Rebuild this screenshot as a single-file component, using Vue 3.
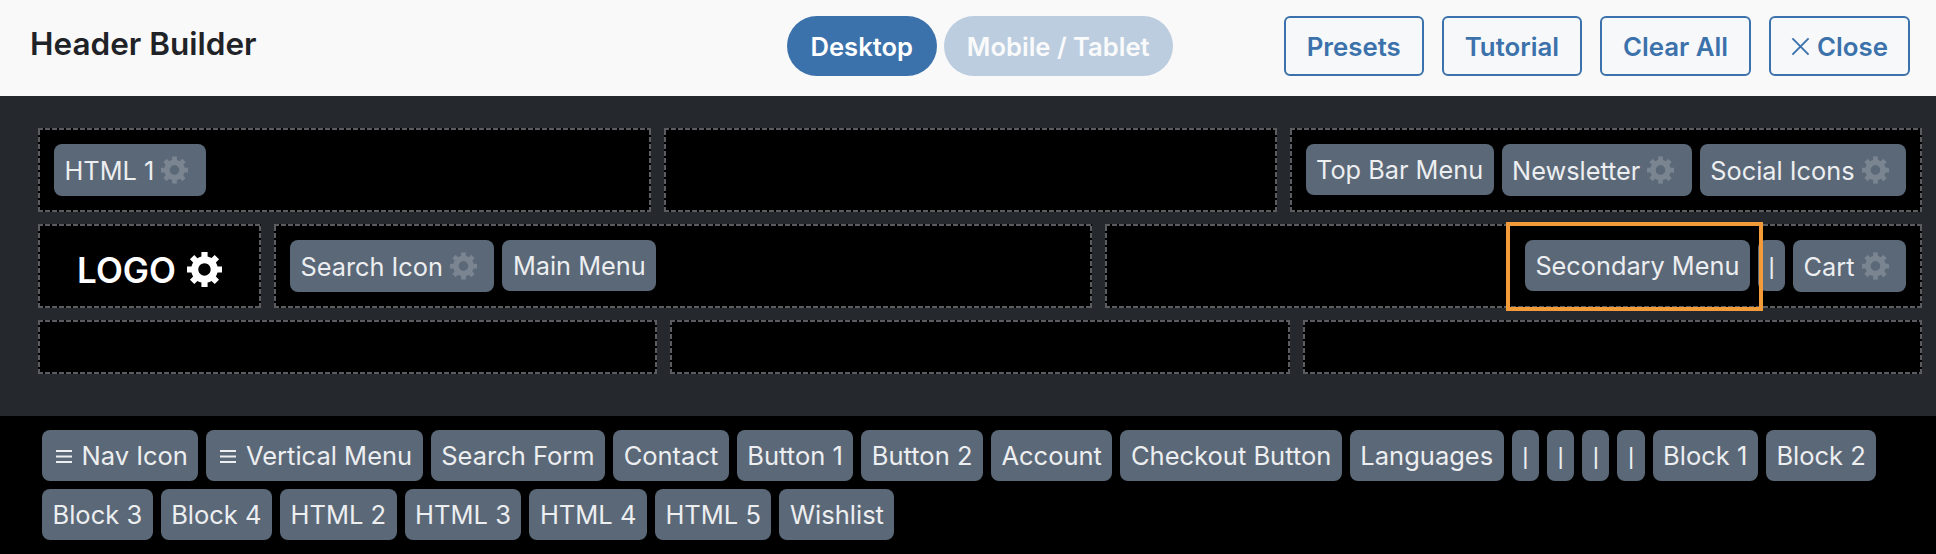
<template>
  <div class="builder">
    <header class="topbar">
      <h1 class="title">Header Builder</h1>
      <div class="toggle">
        <button class="pill active">Desktop</button>
        <button class="pill faded">Mobile / Tablet</button>
      </div>
      <div class="actions">
        <button class="action">Presets</button>
        <button class="action">Tutorial</button>
        <button class="action">Clear All</button>
        <button class="action action-close">
          <svg class="close-x" viewBox="0 0 20 20"><path d="M1.5 1.5l17 17M18.5 1.5l-17 17" /></svg>
          Close
        </button>
      </div>
    </header>

    <section class="canvas">
      <div class="row row-top">
        <div class="cell">
          <div class="chip">HTML 1<svg class="gear" viewBox="1 2 17 17"><path :d="gearPath" /></svg></div>
        </div>
        <div class="cell"></div>
        <div class="cell">
          <div v-for="item in topRight" :key="item.label" class="chip">
            {{ item.label }}<svg v-if="item.gear" class="gear" viewBox="1 2 17 17"><path :d="gearPath" /></svg>
          </div>
        </div>
      </div>

      <div class="row row-main">
        <div class="cell logo-cell">
          <span class="logo">LOGO</span>
          <svg class="logo-gear" viewBox="1 2 17 17"><path :d="gearPath" /></svg>
        </div>
        <div class="cell">
          <div class="chip">Search Icon<svg class="gear" viewBox="1 2 17 17"><path :d="gearPath" /></svg></div>
          <div class="chip">Main Menu</div>
        </div>
        <div class="cell cell-end">
          <div class="chip selected">Secondary Menu</div>
          <div class="chip sep">|</div>
          <div class="chip">Cart<svg class="gear" viewBox="1 2 17 17"><path :d="gearPath" /></svg></div>
        </div>
      </div>

      <div class="row row-bottom">
        <div class="cell"></div>
        <div class="cell"></div>
        <div class="cell"></div>
      </div>
    </section>

    <section class="tray">
      <div v-for="(item, i) in trayItems" :key="i" class="chip" :class="{ sep: item.label === '|' }">
        <svg v-if="item.nav" class="nav-bars" viewBox="0 0 16 13"><path d="M0 1h16M0 6.5h16M0 12h16" /></svg>
        {{ item.label }}
      </div>
    </section>
  </div>
</template>

<script setup>
const gearPath =
  'M18 12h-2.18c-.17.7-.44 1.35-.81 1.93l1.54 1.54-2.1 2.1-1.54-1.54c-.58.36-1.23.63-1.91.79V19H8v-2.18c-.68-.16-1.33-.43-1.91-.79l-1.54 1.54-2.12-2.12 1.54-1.54c-.36-.58-.63-1.23-.79-1.91H1V9.03h2.17c.16-.7.44-1.35.8-1.94L2.43 5.55l2.1-2.1 1.54 1.54c.58-.37 1.24-.64 1.93-.81V2h3v2.18c.68.16 1.33.43 1.91.79l1.54-1.54 2.12 2.12-1.54 1.54c.36.59.64 1.24.8 1.94H18V12zm-8.5 1.5c1.66 0 3-1.34 3-3s-1.34-3-3-3-3 1.34-3 3 1.34 3 3 3z'

const topRight = [
  { label: 'Top Bar Menu' },
  { label: 'Newsletter', gear: true },
  { label: 'Social Icons', gear: true },
]

const trayItems = [
  { label: 'Nav Icon', nav: true },
  { label: 'Vertical Menu', nav: true },
  ...[
    'Search Form', 'Contact', 'Button 1', 'Button 2', 'Account', 'Checkout Button', 'Languages',
    '|', '|', '|', '|', 'Block 1', 'Block 2', 'Block 3', 'Block 4',
    'HTML 2', 'HTML 3', 'HTML 4', 'HTML 5', 'Wishlist',
  ].map((label) => ({ label })),
]
</script>

<style>
html,
body {
  margin: 0;
  background: #000;
}
</style>

<style scoped>
.builder {
  width: 1936px;
  height: 554px;
  overflow: hidden;
  font-family: Inter, "Liberation Sans", sans-serif;
}

.topbar {
  display: flex;
  align-items: center;
  height: 96px;
  box-sizing: border-box;
  padding: 0 26px 4px 30px;
  background: #f9f9f9;
}

.title {
  flex: 1;
  margin: 0 0 5px;
  font-size: 31.5px;
  font-weight: 600;
  color: #1f2328;
}

.toggle {
  display: flex;
  gap: 7px;
}

.pill {
  height: 60px;
  padding: 0 23px;
  border: 0;
  border-radius: 30px;
  font: 600 25.6px Inter, sans-serif;
  color: #fff;
  background: #3c72ab;
}

.pill.active {
  min-width: 150px;
}

.pill.faded {
  opacity: 0.32;
}

.actions {
  display: flex;
  gap: 18px;
  margin-left: 111px;
}

.action {
  display: flex;
  align-items: center;
  gap: 8px;
  height: 60px;
  padding: 0 21px;
  border: 2px solid #3c72ab;
  border-radius: 6px;
  font: 600 25.8px Inter, sans-serif;
  color: #3c72ab;
  background: #f6f8f9;
}

.action-close {
  gap: 7px;
  padding: 0 20px;
}

.close-x {
  width: 19px;
  height: 19px;
  fill: none;
  stroke: #3c72ab;
  stroke-width: 2;
}

.canvas {
  display: flex;
  flex-direction: column;
  gap: 12px;
  height: 320px;
  box-sizing: border-box;
  padding: 32px 14px 0 38px;
  background: #25282d;
}

.row {
  display: grid;
  gap: 13px;
}

.row-top {
  grid-template-columns: 1fr 1fr auto;
}

.row-main {
  grid-template-columns: 223px 1fr 1fr;
}

.row-bottom {
  grid-template-columns: 1fr 1fr 1fr;
}

.cell {
  display: flex;
  align-items: flex-start;
  gap: 8px;
  box-sizing: border-box;
  height: 84px;
  padding: 16px;
  background-color: #000;
  background-image:
    repeating-linear-gradient(90deg, #5a5c5f 0 5px, transparent 5px 7px),
    repeating-linear-gradient(90deg, #5a5c5f 0 5px, transparent 5px 7px),
    repeating-linear-gradient(0deg, #5a5c5f 0 5px, transparent 5px 7px),
    repeating-linear-gradient(0deg, #5a5c5f 0 5px, transparent 5px 7px);
  background-size: 100% 2px, 100% 2px, 2px 100%, 2px 100%;
  background-position: 0 0, 0 100%, 0 0, 100% 0;
  background-repeat: no-repeat;
}

.row-bottom .cell {
  height: 54px;
}

.cell-end {
  justify-content: flex-end;
}

.logo-cell {
  align-items: center;
  justify-content: center;
  gap: 11px;
  padding: 7px 0 0;
}

.logo {
  font-size: 35px;
  font-weight: 600;
  color: #fff;
}

.logo-gear {
  width: 35px;
  height: 35px;
  fill: #fff;
}

.chip {
  display: flex;
  align-items: center;
  box-sizing: border-box;
  min-height: 51px;
  padding: 0 10.5px;
  border-radius: 8px;
  font-size: 25.3px;
  line-height: 31px;
  white-space: nowrap;
  color: #eceef0;
  background: #5b6878;
}

.tray .chip {
  font-size: 25.5px;
}

.chip.sep,
.tray .chip.sep {
  padding: 0 10.5px;
  font-family: "Liberation Sans", sans-serif;
  font-size: 24px;
}

.gear {
  width: 27px;
  height: 28px;
  margin: 0 7px;
  padding: 12px 0;
  box-sizing: content-box;
  fill: #7b8591;
}

.selected {
  position: relative;
}

.selected::after {
  content: "";
  position: absolute;
  top: -18px;
  right: -13px;
  bottom: -20px;
  left: -19px;
  border: 4px solid #f29b38;
  pointer-events: none;
}

.tray {
  display: flex;
  flex-wrap: wrap;
  align-content: flex-start;
  gap: 8px;
  height: 138px;
  box-sizing: border-box;
  margin-left: 8px;
  padding: 14px 0 0 34px;
  background: #000;
}

.nav-bars {
  width: 16px;
  height: 13px;
  margin: 2px 10px 0 3px;
  fill: none;
  stroke: #eceef0;
  stroke-width: 2;
}
</style>
